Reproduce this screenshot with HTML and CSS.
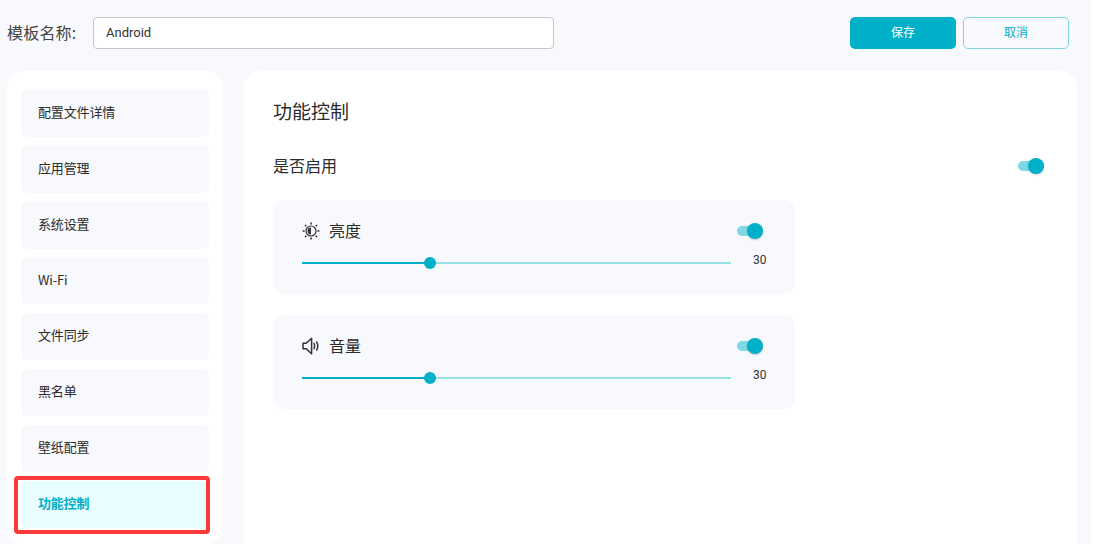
FILE: index.html
```html
<!DOCTYPE html>
<html lang="zh">
<head>
<meta charset="utf-8">
<title>功能控制</title>
<link rel="stylesheet" href="styles.css">
</head>
<body>
<div class="page">
  <header class="topbar">
    <label class="name-label">模板名称:</label>
    <div class="name-input">Android</div>
    <div class="actions">
      <button class="btn btn-primary">保存</button>
      <button class="btn btn-ghost">取消</button>
    </div>
  </header>
  <div class="content">
    <nav class="sidebar">
      <a class="nav-item">配置文件详情</a>
      <a class="nav-item">应用管理</a>
      <a class="nav-item">系统设置</a>
      <a class="nav-item">Wi-Fi</a>
      <a class="nav-item">文件同步</a>
      <a class="nav-item">黑名单</a>
      <a class="nav-item">壁纸配置</a>
      <a class="nav-item active">功能控制</a>
    </nav>
    <main class="card">
      <h1 class="title">功能控制</h1>
      <div class="enable-row">
        <span>是否启用</span>
        <span class="switch switch-main"><i class="knob"></i></span>
      </div>
      <section class="panel">
        <div class="panel-head">
          <svg class="icon" viewBox="0 0 18 18" width="18" height="18" fill="none" stroke="#333" stroke-width="1.2">
            <circle cx="9" cy="9" r="5"/>
            <path d="M9 5.6a3.4 3.4 0 0 0 0 6.8z" fill="#333" stroke="none"/>
            <path d="M9 .6v2M9 15.4v2M.6 9h2M15.4 9h2M3 3l1.3 1.3M13.7 13.7L15 15M3 15l1.3-1.3M13.7 4.3L15 3" stroke-width="1.6"/>
          </svg>
          <span class="panel-name">亮度</span>
          <span class="switch"><i class="knob"></i></span>
        </div>
        <div class="slider-row">
          <div class="slider"><div class="fill"></div><i class="thumb"></i></div>
          <span class="value">30</span>
        </div>
      </section>
      <section class="panel">
        <div class="panel-head">
          <svg class="icon" viewBox="0 0 18 18" width="18" height="18" fill="none" stroke="#333" stroke-width="1.5" stroke-linejoin="round" stroke-linecap="round">
            <path d="M1 6.3h3.2L9.6 1.2v15.6L4.2 11.7H1z"/>
            <path d="M12 6.4c.9 1.6.9 3.6 0 5.2M14.6 4.8c1.5 2.6 1.5 5.8 0 8.4"/>
          </svg>
          <span class="panel-name">音量</span>
          <span class="switch"><i class="knob"></i></span>
        </div>
        <div class="slider-row">
          <div class="slider"><div class="fill"></div><i class="thumb"></i></div>
          <span class="value">30</span>
        </div>
      </section>
    </main>
  </div>
</div>
</body>
</html>
```
FILE: styles.css
```css
* { box-sizing: border-box; }
html, body { margin: 0; height: 100%; overflow: hidden; background: #fff; }
body { font-family: "Noto Sans CJK SC", "Noto Sans", sans-serif; color: #2b2b2b; }
.page { width: 1091px; height: 544px; background: #f8f9fd; display: flex; flex-direction: column; padding: 17px 0 0 7px; overflow: hidden; }
.topbar { display: flex; align-items: center; height: 32px; padding-right: 22px; flex: none; }
.name-label { font-size: 16px; line-height: 30px; height: 32px; width: 86px; letter-spacing: .2px; color: #444; }
.name-input { width: 461px; height: 32px; background: #fff; border: 1px solid #c4c6cc; border-radius: 4px; padding-left: 12px; font: 13px/30px Roboto, sans-serif; color: #333; }
.actions { margin-left: auto; display: flex; gap: 7px; }
.btn { width: 106px; height: 32px; border-radius: 5px; font: 12px "Noto Sans CJK SC", sans-serif; padding: 0 0 3px; }
.btn-primary { background: #00afc8; border: 0; color: #fff; }
.btn-ghost { background: transparent; border: 1px solid #7fd7e3; color: #00afc8; }
.content { display: flex; gap: 21px; margin-top: 22px; flex: 1; min-height: 0; padding-right: 14px; }
.sidebar { width: 216px; flex: none; background: #fff; border-radius: 16px; padding: 19px 14px 0; display: flex; flex-direction: column; gap: 9px; }
.nav-item { position: relative; height: 46.86px; background: #f8f9fd; border-radius: 6px; padding-left: 17px; font-size: 13px; line-height: 43px; letter-spacing: -.15px; color: #2b2b2b; }
.nav-item.active { background: #e8fdff; color: #00afc8; font-weight: 700; }
.nav-item.active::after { content: ""; position: absolute; left: -7px; right: -1px; top: -5px; bottom: -6px; border: 4px solid #fa3a3a; border-radius: 4px; }
.card { flex: 1; background: #fff; border-radius: 16px 16px 0 0; padding: 25px 29px 0; min-width: 0; }
.title { margin: 0; font-size: 19px; font-weight: 400; line-height: 29px; }
.enable-row { display: flex; justify-content: space-between; align-items: center; margin-top: 28px; padding-right: 4px; font-size: 16px; line-height: 24px; height: 24px; }
.switch { position: relative; display: block; width: 26px; height: 10px; background: #7fd8e4; border-radius: 5px; flex: none; }
.switch-main { margin-top: 2px; }
.knob { position: absolute; right: 0; top: -3px; width: 16px; height: 16px; border-radius: 50%; background: #00afc8; box-shadow: 0 1px 2px rgba(0,0,0,.2); }
.panel { width: 522px; height: 94px; background: #f8f9fd; border-radius: 10px; padding: 21px 28px 0 29px; margin-top: 21px; }
.enable-row + .panel { margin-top: 23px; }
.panel-head { display: flex; align-items: center; height: 20px; font-size: 16px; padding-right: 4px; }
.icon { flex: none; }
.panel-name { margin-left: 9px; margin-right: auto; line-height: 18px; height: 20px; }
.slider-row { display: flex; align-items: center; margin-top: 12px; height: 20px; }
.slider { position: relative; width: 429px; height: 2px; background: #99dfe7; flex: none; }
.fill { width: 128px; height: 2px; background: #00afc8; }
.thumb { position: absolute; left: 122px; top: -5px; width: 12px; height: 12px; border-radius: 50%; background: #00afc8; }
.value { margin-left: 22px; font: 12px/14px Roboto, sans-serif; color: #333; position: relative; top: -3px; }
```
